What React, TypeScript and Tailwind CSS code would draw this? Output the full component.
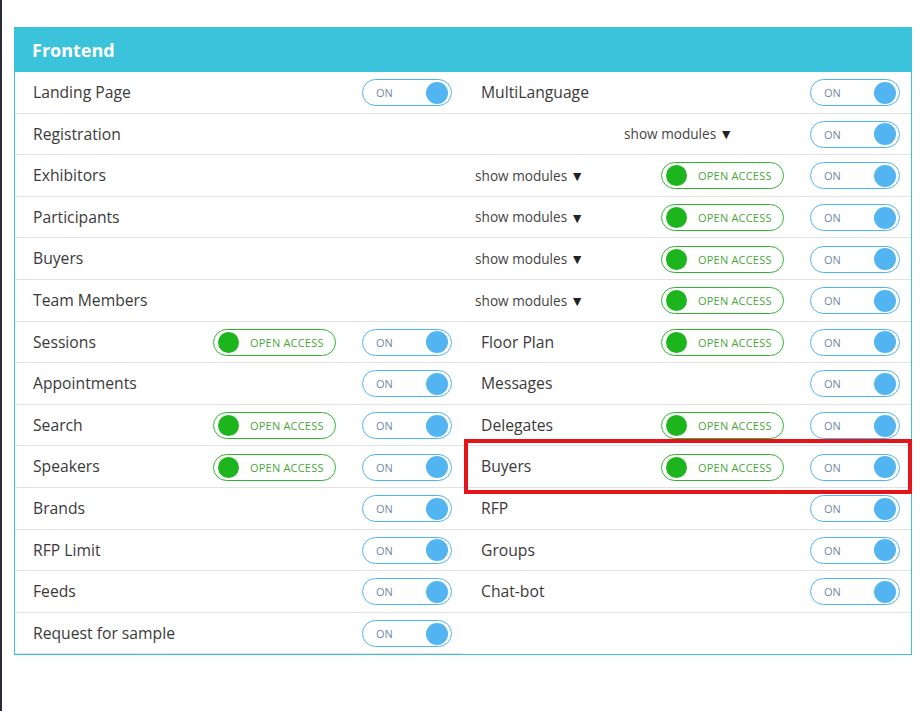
import React from "react";

type Cell = { label: string; open?: boolean } | null;
type Row =
  | { kind: "full"; label: string; open: boolean }
  | { kind: "half"; left: Cell; right: Cell; highlight?: boolean };

const rows: Row[] = [
  { kind: "half", left: { label: "Landing Page" }, right: { label: "MultiLanguage" } },
  { kind: "full", label: "Registration", open: false },
  { kind: "full", label: "Exhibitors", open: true },
  { kind: "full", label: "Participants", open: true },
  { kind: "full", label: "Buyers", open: true },
  { kind: "full", label: "Team Members", open: true },
  { kind: "half", left: { label: "Sessions", open: true }, right: { label: "Floor Plan", open: true } },
  { kind: "half", left: { label: "Appointments" }, right: { label: "Messages" } },
  { kind: "half", left: { label: "Search", open: true }, right: { label: "Delegates", open: true } },
  { kind: "half", left: { label: "Speakers", open: true }, right: { label: "Buyers", open: true }, highlight: true },
  { kind: "half", left: { label: "Brands" }, right: { label: "RFP" } },
  { kind: "half", left: { label: "RFP Limit" }, right: { label: "Groups" } },
  { kind: "half", left: { label: "Feeds" }, right: { label: "Chat-bot" } },
  { kind: "half", left: { label: "Request for sample" }, right: null },
];

function OnToggle() {
  return (
    <div className="flex h-[27px] w-[90px] shrink-0 items-center justify-between rounded-full border border-[#4db6ee] bg-white pl-[13px] pr-[3px]">
      <span className="text-[11px] leading-none text-[#7189a6]">ON</span>
      <span className="size-[22px] rounded-full bg-[#52b5f2]" />
    </div>
  );
}

function OpenAccess() {
  return (
    <div className="mr-[26px] flex h-[27px] w-[123px] shrink-0 items-center gap-[11px] rounded-full border border-[#2fb52f] bg-white pl-[4px]">
      <span className="size-[21px] rounded-full bg-[#1db51d]" />
      <span className="text-[11px] leading-none tracking-[0.2px] text-[#4aa63a]">OPEN ACCESS</span>
    </div>
  );
}

function ShowModules() {
  return (
    <span className="mr-[77px] flex items-center gap-[3px] text-[13.6px] text-[#444]">
      show modules <span className="text-[14px] leading-none text-[#222]">▼</span>
    </span>
  );
}

function HalfCell({ cell, highlight }: { cell: Cell; highlight?: boolean }) {
  if (!cell) return <div className="h-[41.6px]" />;
  return (
    <div className="relative flex h-[41.6px] items-center border-b border-[#e2e2e2] pl-[18px] pr-[11px] pt-[1px]">
      <span className="flex-1 text-[15.7px] text-[#3a3a3a]">{cell.label}</span>
      {cell.open && <OpenAccess />}
      <OnToggle />
      {highlight && (
        <div className="pointer-events-none absolute -top-[7px] -bottom-[7px] left-[1px] -right-[1px] border-4 border-[#e3151b]" />
      )}
    </div>
  );
}

export default function App() {
  return (
    <div
      className="flex min-h-screen w-full bg-white"
      style={{ fontFamily: '"Open Sans", "Noto Sans", sans-serif' }}
    >
      <div className="w-[2px] shrink-0 bg-[#2c2c36]" />
      <div className="pl-[12px] pt-[27px]">
        <div className="w-[898px] border border-t-0 border-[#3bc3dc]">
          <div className="-mx-px flex h-[45px] items-center bg-[#3bc3dc] px-[18px] pt-[2px]">
            <span className="text-[18px] font-bold text-white">Frontend</span>
          </div>
          {rows.map((r, i) =>
            r.kind === "full" ? (
              <div
                key={i}
                className="flex h-[41.6px] items-center border-b border-[#e2e2e2] pl-[18px] pr-[11px] pt-[1px]"
              >
                <span className="flex-1 text-[15.7px] text-[#3a3a3a]">{r.label}</span>
                <ShowModules />
                {r.open && <OpenAccess />}
                <OnToggle />
              </div>
            ) : (
              <div key={i} className="grid grid-cols-2">
                <HalfCell cell={r.left} />
                <HalfCell cell={r.right} highlight={r.highlight} />
              </div>
            )
          )}
        </div>
      </div>
    </div>
  );
}
